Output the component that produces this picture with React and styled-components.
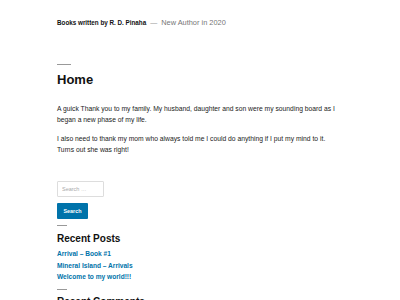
import React from "react";
import styled, { createGlobalStyle } from "styled-components";

const GlobalStyle = createGlobalStyle`
  html, body {
    margin: 0;
    padding: 0;
    background: #fff;
    font-family: "Liberation Sans", Arial, sans-serif;
    color: #111;
  }
`;

const Page = styled.div({
  display: "flex",
  flexDirection: "column",
  alignItems: "flex-start",
  width: "341px",
  padding: "18px 0 0 57px",
  height: "300px",
  overflow: "hidden",
  boxSizing: "border-box",
});

const SiteHeader = styled.header({
  display: "flex",
  alignItems: "center",
  lineHeight: "10px",
  whiteSpace: "nowrap",
});
const SiteTitle = styled.span({
  fontSize: "6.3px",
  fontWeight: "bold",
  color: "#111",
});
const Dash = styled.span({
  fontSize: "7px",
  color: "#999",
  margin: "0 4px",
});
const SiteDescription = styled.span({
  fontSize: "7.4px",
  color: "#767676",
});

const Rule = styled.hr({
  flex: "none",
  border: "0",
  height: "1px",
  width: ({ width }) => width || "14px",
  background: "#999",
  margin: ({ margin }) => margin,
});

const PageTitle = styled.h1({
  fontSize: "13px",
  lineHeight: "16px",
  fontWeight: "bold",
  margin: "0",
});

const Paragraph = styled.p({
  fontSize: "6.75px",
  lineHeight: "11px",
  color: "#222",
  margin: ({ margin }) => margin,
});

const SearchInput = styled.input({
  display: "block",
  flex: "none",
  appearance: "none",
  boxSizing: "border-box",
  width: "47px",
  height: "16px",
  minHeight: "16px",
  marginTop: "26.5px",
  padding: "0 4px",
  border: "1px solid #ddd",
  borderRadius: "1px",
  background: "#fff",
  fontFamily: "inherit",
  fontSize: "5.5px",
  outline: "none",
  "&::placeholder": {
    color: "#aaa",
  },
});

const SearchButton = styled.button({
  display: "block",
  flex: "none",
  boxSizing: "border-box",
  width: "31px",
  height: "16px",
  minHeight: "16px",
  marginTop: "6px",
  padding: "0",
  border: "0",
  borderRadius: "1px",
  background: "#0073aa",
  color: "#fff",
  fontFamily: "inherit",
  fontWeight: "bold",
  fontSize: "5.4px",
});

const WidgetTitle = styled.h2({
  flex: "none",
  fontSize: "10px",
  lineHeight: "12px",
  fontWeight: "bold",
  margin: "0",
  whiteSpace: "nowrap",
});

const PostList = styled.ul({
  flex: "none",
  listStyle: "none",
  padding: "0",
  margin: "3.5px 0 0",
});
const PostLink = styled.a({
  display: "block",
  fontSize: "6.6px",
  lineHeight: "11.5px",
  fontWeight: "bold",
  color: "#0073aa",
  textDecoration: "none",
});

const posts = ["Arrival – Book #1", "Mineral Island – Arrivals", "Welcome to my world!!!"];

export default function App() {
  return (
    <>
      <GlobalStyle />
      <Page>
        <SiteHeader>
          <SiteTitle>Books written by R. D. Pinaha</SiteTitle>
          <Dash>—</Dash>
          <SiteDescription>New Author in 2020</SiteDescription>
        </SiteHeader>

        <Rule margin="36px 0 0" />
        <PageTitle style={{ marginTop: "7px" }}>Home</PageTitle>

        <Paragraph margin="14.5px 0 0">
          A guick Thank you to my family. My husband, daughter and son were my sounding board as I
          began a new phase of my life.
        </Paragraph>
        <Paragraph margin="8px 0 0">
          I also need to thank my mom who always told me I could do anything if I put my mind to it.
          Turns out she was right!
        </Paragraph>

        <SearchInput type="search" placeholder="Search …" />
        <SearchButton>Search</SearchButton>

        <Rule width="10px" margin="6px 0 0" />
        <WidgetTitle style={{ marginTop: "6.7px" }}>Recent Posts</WidgetTitle>
        <PostList>
          {posts.map((p) => (
            <li key={p}>
              <PostLink href="#">{p}</PostLink>
            </li>
          ))}
        </PostList>

        <Rule width="10px" margin="6.5px 0 0" />
        <WidgetTitle style={{ marginTop: "5.5px" }}>Recent Comments</WidgetTitle>
      </Page>
    </>
  );
}
